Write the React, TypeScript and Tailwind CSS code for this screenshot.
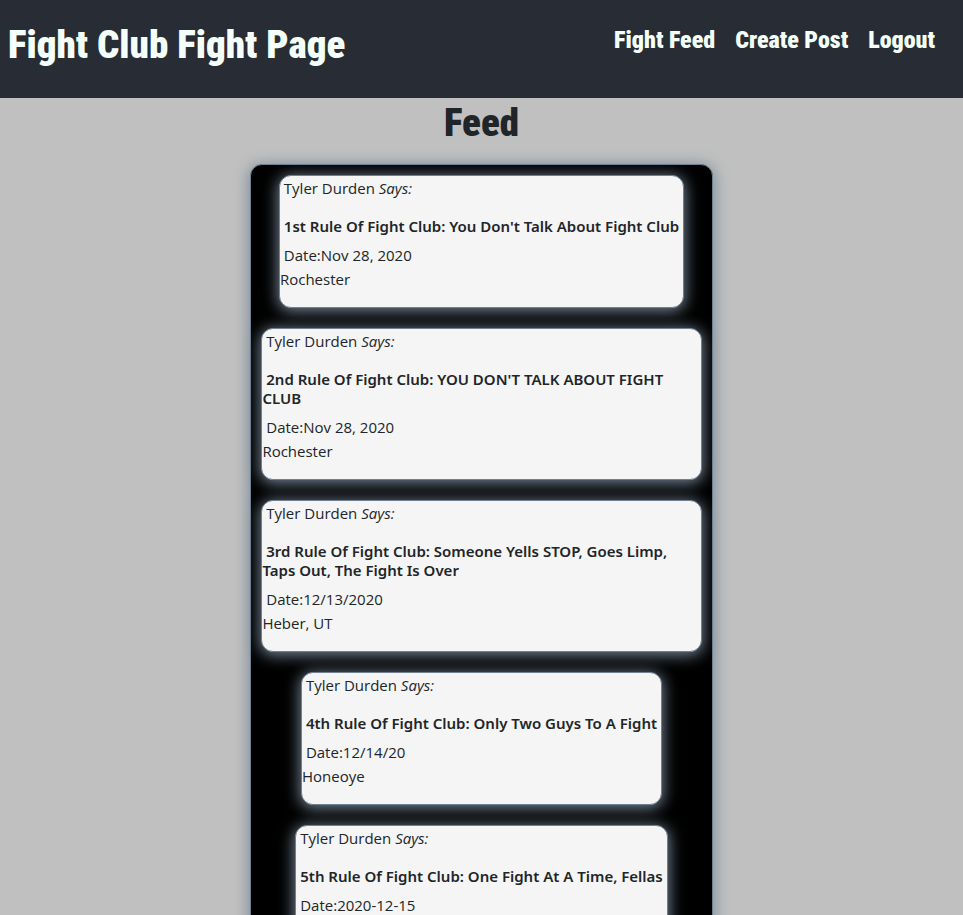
type Post = {
  author: string;
  title: string;
  date: string;
  place: string;
};

const posts: Post[] = [
  { author: "Tyler Durden", title: "1st Rule Of Fight Club: You Don't Talk About Fight Club", date: "Nov 28, 2020", place: "Rochester" },
  { author: "Tyler Durden", title: "2nd Rule Of Fight Club: YOU DON'T TALK ABOUT FIGHT CLUB", date: "Nov 28, 2020", place: "Rochester" },
  { author: "Tyler Durden", title: "3rd Rule Of Fight Club: Someone Yells STOP, Goes Limp, Taps Out, The Fight Is Over", date: "12/13/2020", place: "Heber, UT" },
  { author: "Tyler Durden", title: "4th Rule Of Fight Club: Only Two Guys To A Fight", date: "12/14/20", place: "Honeoye" },
  { author: "Tyler Durden", title: "5th Rule Of Fight Club: One Fight At A Time, Fellas", date: "2020-12-15", place: "" },
];

const links = ["Fight Feed", "Create Post", "Logout"];

function Header() {
  return (
    <header className="flex h-[98px] items-start justify-between bg-[#282c34] pl-2 pr-7 font-[Impact,'Roboto_Condensed',Roboto,sans-serif] font-black text-[#f5fffa]">
      <h1 className="pt-5 text-[39px] leading-[50px]">Fight Club Fight Page</h1>
      <nav className="flex gap-5 pt-5 text-[24px] leading-10">
        {links.map((link) => (
          <a key={link} href="#">{link}</a>
        ))}
      </nav>
    </header>
  );
}

function PostCard({ post }: { post: Post }) {
  return (
    <article className="rounded-xl border border-[#708090] bg-[#f5f5f5] pb-4 shadow-[0_2px_15px_1px_#778899]">
      <p className="mb-[17px]">&nbsp;{post.author} <em>Says:</em></p>
      <h2 className="mb-[7px] font-['Segoe_UI','Noto_Sans',sans-serif] font-semibold leading-[19px]">&nbsp;{post.title}&nbsp;</h2>
      <p>&nbsp;Date:{post.date}</p>
      <p className="min-h-6">{post.place}</p>
    </article>
  );
}

export default function App() {
  return (
    <div className="min-h-screen bg-[#c0c0c0] pb-5 font-['Segoe_UI','Open_Sans',sans-serif] text-[15px] leading-6 text-[#212529]">
      <Header />
      <main>
        <h1 className="text-center font-[Impact,'Roboto_Condensed',Roboto,sans-serif] text-[39px] font-black leading-[50px]">Feed</h1>
        <section className="mx-auto mt-4 flex w-[48%] flex-col items-center gap-5 rounded-xl border border-[#708090] bg-black px-2.5 py-2.5 shadow-[0_2px_15px_1px_#778899]">
          {posts.map((post) => (
            <PostCard key={post.title} post={post} />
          ))}
        </section>
      </main>
    </div>
  );
}
